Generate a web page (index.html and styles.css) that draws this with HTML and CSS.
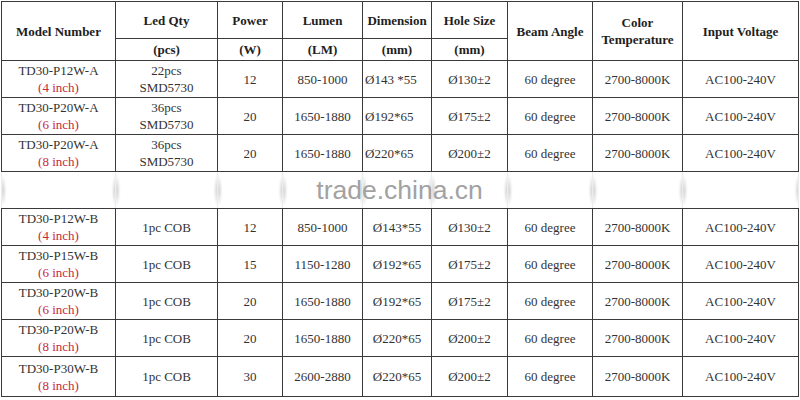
FILE: index.html
```html
<!DOCTYPE html>
<html>
<head>
<meta charset="utf-8">
<link rel="stylesheet" href="styles.css">
</head>
<body>
<div class="wrap">
<table class="spec">
<colgroup>
<col class="c1"><col class="c2"><col class="c3"><col class="c4"><col class="c5"><col class="c6"><col class="c7"><col class="c8"><col class="c9">
</colgroup>
<thead>
<tr class="h1">
<th rowspan="2">Model Number</th>
<th>Led Qty</th>
<th>Power</th>
<th>Lumen</th>
<th>Dimension</th>
<th>Hole Size</th>
<th rowspan="2">Beam Angle</th>
<th rowspan="2">Color<br>Temperature</th>
<th rowspan="2">Input Voltage</th>
</tr>
<tr class="h2">
<th>(pcs)</th>
<th>(W)</th>
<th>(LM)</th>
<th>(mm)</th>
<th>(mm)</th>
</tr>
</thead>
<tbody>
<tr>
<td>TD30-P12W-A<br><span class="size">(4 inch)</span></td>
<td>22pcs<br>SMD5730</td>
<td>12</td>
<td>850-1000</td>
<td class="left">Ø143 *55</td>
<td>Ø130±2</td>
<td>60 degree</td>
<td>2700-8000K</td>
<td>AC100-240V</td>
</tr>
<tr>
<td>TD30-P20W-A<br><span class="size">(6 inch)</span></td>
<td>36pcs<br>SMD5730</td>
<td>20</td>
<td>1650-1880</td>
<td class="left">Ø192*65</td>
<td>Ø175±2</td>
<td>60 degree</td>
<td>2700-8000K</td>
<td>AC100-240V</td>
</tr>
<tr>
<td>TD30-P20W-A<br><span class="size">(8 inch)</span></td>
<td>36pcs<br>SMD5730</td>
<td>20</td>
<td>1650-1880</td>
<td class="left">Ø220*65</td>
<td>Ø200±2</td>
<td>60 degree</td>
<td>2700-8000K</td>
<td>AC100-240V</td>
</tr>
<tr class="band">
<td></td><td></td><td></td><td></td><td></td><td></td><td></td><td></td><td></td>
</tr>
<tr>
<td>TD30-P12W-B<br><span class="size">(4 inch)</span></td>
<td>1pc COB</td>
<td>12</td>
<td>850-1000</td>
<td>Ø143*55</td>
<td>Ø130±2</td>
<td>60 degree</td>
<td>2700-8000K</td>
<td>AC100-240V</td>
</tr>
<tr>
<td>TD30-P15W-B<br><span class="size">(6 inch)</span></td>
<td>1pc COB</td>
<td>15</td>
<td>1150-1280</td>
<td>Ø192*65</td>
<td>Ø175±2</td>
<td>60 degree</td>
<td>2700-8000K</td>
<td>AC100-240V</td>
</tr>
<tr>
<td>TD30-P20W-B<br><span class="size">(6 inch)</span></td>
<td>1pc COB</td>
<td>20</td>
<td>1650-1880</td>
<td>Ø192*65</td>
<td>Ø175±2</td>
<td>60 degree</td>
<td>2700-8000K</td>
<td>AC100-240V</td>
</tr>
<tr>
<td>TD30-P20W-B<br><span class="size">(8 inch)</span></td>
<td>1pc COB</td>
<td>20</td>
<td>1650-1880</td>
<td>Ø220*65</td>
<td>Ø200±2</td>
<td>60 degree</td>
<td>2700-8000K</td>
<td>AC100-240V</td>
</tr>
<tr class="last">
<td>TD30-P30W-B<br><span class="size">(8 inch)</span></td>
<td>1pc COB</td>
<td>30</td>
<td>2600-2880</td>
<td>Ø220*65</td>
<td>Ø200±2</td>
<td>60 degree</td>
<td>2700-8000K</td>
<td>AC100-240V</td>
</tr>
</tbody>
</table>
<div class="watermark">trade.china.cn</div>
</div>
</body>
</html>
```

FILE: styles.css
```css
html, body {
  margin: 0;
  padding: 0;
  background: #ffffff;
}

.wrap {
  position: relative;
  width: 798px;
  padding: 1px 0 0 1px;
}

.spec {
  border-collapse: collapse;
  table-layout: fixed;
  width: 797px;
  font-family: "Liberation Serif", "Times New Roman", serif;
  font-size: 13px;
  color: #333333;
}

.c1 { width: 114px; }
.c2 { width: 102px; }
.c3 { width: 65px; }
.c4 { width: 80px; }
.c5 { width: 69px; }
.c6 { width: 76px; }
.c7 { width: 85px; }
.c8 { width: 90px; }
.c9 { width: 116px; }

.spec th,
.spec td {
  border: 1px solid #3a3a3a;
  padding: 0 2px;
  text-align: center;
  vertical-align: middle;
  line-height: 17px;
}

.spec th {
  font-weight: bold;
  color: #1e1e1e;
}

.h1 { height: 37px; }
.h2 { height: 22px; }

.spec tbody tr { height: 37px; }
.spec tbody tr.last { height: 40px; }

.spec td.left {
  text-align: left;
}

.size {
  color: #c8283c;
}

.spec tr.band td {
  border-left-color: #ececec;
  border-right-color: #ececec;
  background:
    radial-gradient(4px 16px at 0 50%, #cfcfcf, rgba(255,255,255,0)),
    radial-gradient(4px 16px at 100% 50%, #cfcfcf, rgba(255,255,255,0));
}

.watermark {
  position: absolute;
  left: 1px;
  width: 797px;
  top: 172px;
  height: 37px;
  line-height: 37px;
  text-align: center;
  font-family: "Liberation Sans", Arial, sans-serif;
  font-size: 26.5px;
  color: #a2a2a2;
}
```
